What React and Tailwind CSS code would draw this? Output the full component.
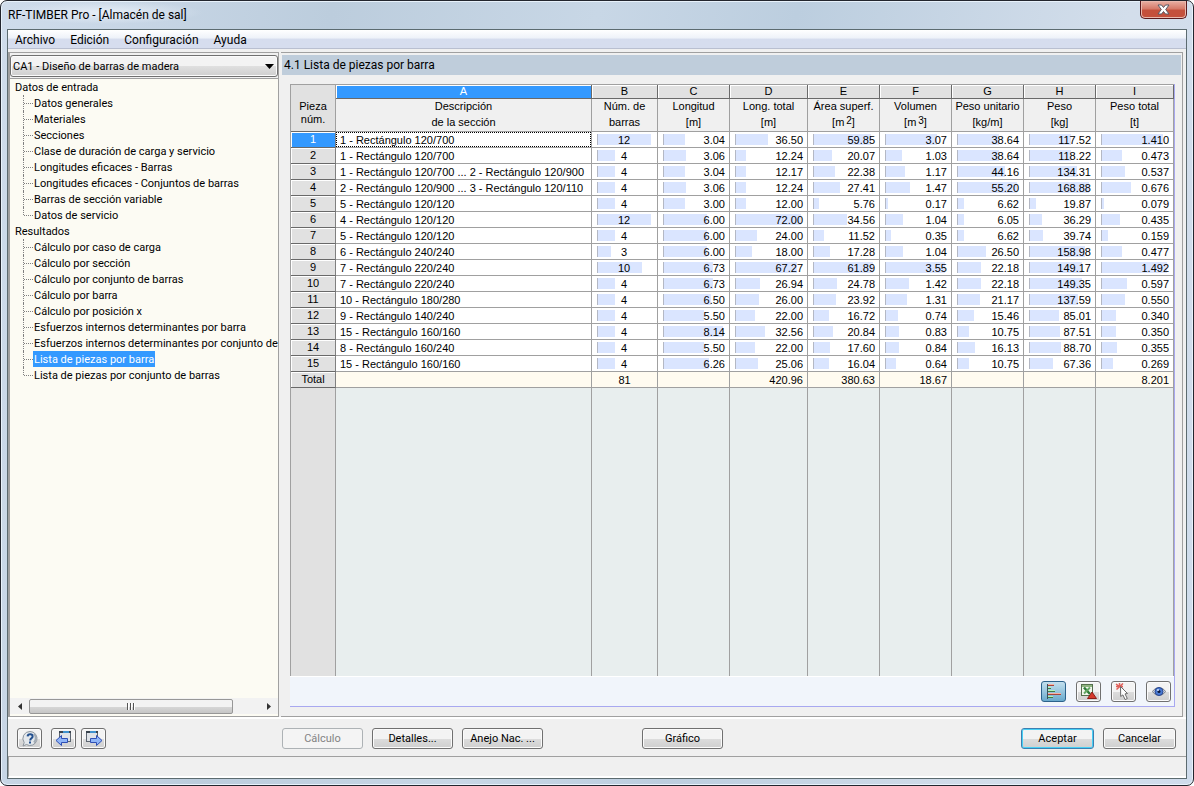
import React, { useState } from 'react';
import clsx from 'clsx';

const menus = ['Archivo', 'Edición', 'Configuración', 'Ayuda'];

const tree = [
  {
    title: 'Datos de entrada',
    items: [
      'Datos generales',
      'Materiales',
      'Secciones',
      'Clase de duración de carga y servicio',
      'Longitudes eficaces - Barras',
      'Longitudes eficaces - Conjuntos de barras',
      'Barras de sección variable',
      'Datos de servicio',
    ],
  },
  {
    title: 'Resultados',
    items: [
      'Cálculo por caso de carga',
      'Cálculo por sección',
      'Cálculo por conjunto de barras',
      'Cálculo por barra',
      'Cálculo por posición x',
      'Esfuerzos internos determinantes por barra',
      'Esfuerzos internos determinantes por conjunto de',
      'Lista de piezas por barra',
      'Lista de piezas por conjunto de barras',
    ],
  },
];

const columns = [
  { letter: 'A', title: 'Descripción', unit: 'de la sección', width: '' },
  { letter: 'B', title: 'Núm. de', unit: 'barras', width: 'w-[66px]', max: 12 },
  { letter: 'C', title: 'Longitud', unit: '[m]', width: 'w-[72px]', max: 8.14 },
  { letter: 'D', title: 'Long. total', unit: '[m]', width: 'w-[78px]', max: 72 },
  { letter: 'E', title: 'Área superf.', unit: 'm', power: '2', width: 'w-[72px]', max: 61.89 },
  { letter: 'F', title: 'Volumen', unit: 'm', power: '3', width: 'w-[72px]', max: 3.55 },
  { letter: 'G', title: 'Peso unitario', unit: '[kg/m]', width: 'w-[72px]', max: 55.2 },
  { letter: 'H', title: 'Peso', unit: '[kg]', width: 'w-[72px]', max: 168.88 },
  { letter: 'I', title: 'Peso total', unit: '[t]', width: 'w-[78px]', max: 1.492 },
];

const rows = [
  ['1 - Rectángulo 120/700', '12', '3.04', '36.50', '59.85', '3.07', '38.64', '117.52', '1.410'],
  ['1 - Rectángulo 120/700', '4', '3.06', '12.24', '20.07', '1.03', '38.64', '118.22', '0.473'],
  ['1 - Rectángulo 120/700 ... 2 - Rectángulo 120/900', '4', '3.04', '12.17', '22.38', '1.17', '44.16', '134.31', '0.537'],
  ['2 - Rectángulo 120/900 ... 3 - Rectángulo 120/110', '4', '3.06', '12.24', '27.41', '1.47', '55.20', '168.88', '0.676'],
  ['5 - Rectángulo 120/120', '4', '3.00', '12.00', '5.76', '0.17', '6.62', '19.87', '0.079'],
  ['4 - Rectángulo 120/120', '12', '6.00', '72.00', '34.56', '1.04', '6.05', '36.29', '0.435'],
  ['5 - Rectángulo 120/120', '4', '6.00', '24.00', '11.52', '0.35', '6.62', '39.74', '0.159'],
  ['6 - Rectángulo 240/240', '3', '6.00', '18.00', '17.28', '1.04', '26.50', '158.98', '0.477'],
  ['7 - Rectángulo 220/240', '10', '6.73', '67.27', '61.89', '3.55', '22.18', '149.17', '1.492'],
  ['7 - Rectángulo 220/240', '4', '6.73', '26.94', '24.78', '1.42', '22.18', '149.35', '0.597'],
  ['10 - Rectángulo 180/280', '4', '6.50', '26.00', '23.92', '1.31', '21.17', '137.59', '0.550'],
  ['9 - Rectángulo 140/240', '4', '5.50', '22.00', '16.72', '0.74', '15.46', '85.01', '0.340'],
  ['15 - Rectángulo 160/160', '4', '8.14', '32.56', '20.84', '0.83', '10.75', '87.51', '0.350'],
  ['8 - Rectángulo 160/240', '4', '5.50', '22.00', '17.60', '0.84', '16.13', '88.70', '0.355'],
  ['15 - Rectángulo 160/160', '4', '6.26', '25.06', '16.04', '0.64', '10.75', '67.36', '0.269'],
];

const totals = ['', '81', '', '420.96', '380.63', '18.67', '', '', '8.201'];

const HelpIcon = () => (
  <svg width="18" height="18" viewBox="0 0 18 18">
    <path d="M9 1.5a7 7 0 1 1-3.6 13L2 16l1.2-3.4A7 7 0 0 1 9 1.5z" fill="#e4e8ec" stroke="#8d959d" />
    <path d="M13 3.500a6.500 6.500 0 0 1 0 9" fill="none" stroke="#a2abb4" strokeWidth="2" />
    <path d="M6.600 6.400c.2-3 5-3 5 0 0 2-2.400 1.800-2.400 4" fill="none" stroke="#23508f" strokeWidth="2" />
    <rect x="8" y="11.500" width="2" height="2" fill="#23508f" />
  </svg>
);

const PanelIcon = ({ forward }) => (
  <svg width="18" height="18" viewBox="0 0 18 18">
    <g transform={forward ? 'translate(-3 0)' : undefined}>
      <rect x="4.500" y="1.500" width="11" height="10" fill="#dfe3e8" stroke="#5c6570" />
      <path d="M4 2h12" stroke="#39434e" strokeWidth="2" />
      <path d="M8 2h6" stroke="#3f92cf" strokeWidth="2" />
    </g>
    <path
      d={forward ? 'M17 10.500l-5.500-5v3h-6v4h6v3z' : 'M1 10.500l5.500-5v3h6v4h-6v3z'}
      fill="#8fb5f8"
      stroke="#2f4fb5"
    />
  </svg>
);

const BarsIcon = () => (
  <svg width="18" height="18" viewBox="0 0 18 18" shapeRendering="crispEdges">
    <rect x="2" y="1" width="1" height="15" fill="#3c5058" />
    <rect x="3" y="1" width="6" height="1" fill="#f6b3a6" />
    <rect x="3" y="2" width="6" height="1" fill="#a8463c" />
    <rect x="3" y="4" width="3" height="1" fill="#b4f2ba" />
    <rect x="3" y="5" width="3" height="1" fill="#3e7a4a" />
    <rect x="3" y="7" width="7" height="1" fill="#b4f2ba" />
    <rect x="3" y="8" width="7" height="1" fill="#3e7a4a" />
    <rect x="3" y="10" width="13" height="1" fill="#f6b3a6" />
    <rect x="3" y="11" width="13" height="1" fill="#a8463c" />
    <rect x="3" y="13" width="5" height="1" fill="#b4f2ba" />
    <rect x="3" y="14" width="5" height="1" fill="#3e7a4a" />
  </svg>
);

const ExcelIcon = () => (
  <svg width="18" height="18" viewBox="0 0 18 18">
    <rect x="1.500" y="1.500" width="11" height="11" fill="#f3f7ef" stroke="#55704d" />
    <path d="M2 2h10v2H2z" fill="#8fb47f" />
    <path d="M4 4.500l6 6.500" stroke="#2f7a38" strokeWidth="2.500" />
    <path d="M10 4.500l-6 6" stroke="#62a862" strokeWidth="2" />
    <path d="M12 9l4.500 6.500h-9z" fill="#d63a2c" stroke="#8c1d16" />
  </svg>
);

const PickIcon = () => (
  <svg width="18" height="18" viewBox="0 0 18 18">
    <path d="M1 1l7 5M8 .500L1.500 6.500M4.500 0v4M1 3.500h7" stroke="#e0605a" strokeWidth="1.500" />
    <path d="M5.500 3.500l7 7-2.500.4 2.300 4.600-2.200 1.100-2.200-4.700L5.700 13.500z" fill="#fff" stroke="#6b6b6b" />
  </svg>
);

const EyeIcon = () => (
  <svg width="18" height="18" viewBox="0 0 18 18">
    <path d="M2.500 8.500c3-5 10-5 13 0-3 5-10 5-13 0z" fill="#d0d5dd" stroke="#7b8088" />
    <circle cx="9" cy="8.500" r="4" fill="#4a7ad2" stroke="#28458f" />
    <circle cx="9" cy="8.500" r="1.500" fill="#0e1b3f" />
    <circle cx="8" cy="7" r="1" fill="#cfe0ff" />
  </svg>
);

const IconButton = ({ label, active, children }) => (
  <button
    type="button"
    aria-label={label}
    className={clsx(
      'flex h-[21px] w-[25px] items-center justify-center rounded-[3px] border',
      active
        ? 'border-[#2c628b] bg-linear-to-b from-[#c3dfee] via-[#98c6de] to-[#68a9cc]'
        : 'border-[#707070] bg-linear-to-b from-[#f3f3f3] from-50% via-[#dddddd] via-50% to-[#cfcfcf] shadow-[inset_0_0_0_1px_#fbfbfb]'
    )}
  >
    {children}
  </button>
);

const PushButton = ({ children, primary, disabled, className }) => (
  <button
    type="button"
    disabled={disabled}
    className={clsx(
      'h-[21px] rounded-[3px] border pt-px text-center leading-[18px]',
      disabled && 'border-[#adb2b5] bg-[#f4f4f4] text-[#838383]',
      primary &&
        'border-[#3c7fb1] bg-linear-to-b from-[#f3f3f3] from-50% via-[#dddddd] via-50% to-[#cfcfcf] shadow-[inset_0_0_0_1px_#48d0f5]',
      !disabled &&
        !primary &&
        'border-[#707070] bg-linear-to-b from-[#f3f3f3] from-50% via-[#dddddd] via-50% to-[#cfcfcf] shadow-[inset_0_0_0_1px_#fbfbfb]',
      className
    )}
  >
    {children}
  </button>
);

const TitleBar = () => (
  <header className="flex h-7 shrink-0 items-start justify-between">
    <h1 className="rounded-full bg-[radial-gradient(closest-side,#e6eef7,transparent)] pt-[5px] pr-4 pl-px text-[12px] leading-[18px] text-black">
      RF-TIMBER Pro - [Almacén de sal]
    </h1>
    <button
      type="button"
      aria-label="Cerrar"
      className="flex h-[18px] w-[47px] items-center justify-center rounded-b-[5px] border border-t-0 border-[#5a1a1e] bg-linear-to-b from-[#e9b0a4] from-0% via-[#d67b6a] via-45% to-[#c4503c] to-55% shadow-[inset_0_0_0_1px_#e9b9ae]"
    >
      <svg width="13" height="11" viewBox="0 0 13 11">
        <path d="M1 1h3.500l2 2.500L8.500 1H12L8.700 5.500 12 10H8.500l-2-2.500-2 2.500H1l3.300-4.500z" fill="#fff" stroke="#565a66" />
      </svg>
    </button>
  </header>
);

const MenuBar = () => (
  <nav className="flex h-[19px] shrink-0 gap-[15px] border-b border-[#b9bfd0] bg-linear-to-b from-white from-0% via-[#eef2f9] via-45% to-[#d6ddee] to-50% pt-0.5 pl-[7px] text-[12px] leading-4">
    {menus.map((menu) => (
      <button key={menu} type="button">
        {menu}
      </button>
    ))}
  </nav>
);

const TreeView = ({ selected, onSelect }) => (
  <div className="flex min-h-0 flex-1 flex-col border-t border-[#a0a0a0] bg-[#fcfbf3]">
    <div className="min-h-0 flex-1 overflow-hidden whitespace-nowrap">
      {tree.map((group) => (
        <section key={group.title}>
          <h2 className="h-4 pt-0.5 pl-[5px] leading-[14px]">{group.title}</h2>
          <ul className="pl-[13px]">
            {group.items.map((item, i) => (
              <li key={item} className="flex h-4">
                <span
                  className={clsx(
                    'shrink-0 border-l border-dotted border-[#808080]',
                    i === group.items.length - 1 ? 'h-2' : 'h-4'
                  )}
                />
                <span className="mt-2 w-[9px] shrink-0 border-t border-dotted border-[#808080]" />
                <button
                  type="button"
                  onClick={() => onSelect(item)}
                  className={clsx(
                    'h-4 shrink-0 px-px pt-0.5 leading-[14px]',
                    item === selected && 'bg-[#3399ff] text-white'
                  )}
                >
                  {item}
                </button>
              </li>
            ))}
          </ul>
        </section>
      ))}
    </div>
    <div className="mb-0.5 flex h-4 shrink-0 items-center bg-[#f2f2f2]">
      <button type="button" aria-label="Desplazar a la izquierda" className="flex w-[19px] justify-center">
        <svg width="4" height="7" viewBox="0 0 4 7">
          <path d="M4 0v7L0 3.500z" fill="#333" />
        </svg>
      </button>
      <div className="flex h-[15px] w-[204px] items-center justify-center gap-px rounded-[2px] border border-[#979797] bg-linear-to-b from-[#f3f3f3] from-50% via-[#d8d8d8] via-50% to-[#c6c6c6]">
        <span className="h-[7px] w-0.5 border-r border-white bg-[#555]" />
        <span className="h-[7px] w-0.5 border-r border-white bg-[#555]" />
        <span className="h-[7px] w-0.5 border-r border-white bg-[#555]" />
      </div>
      <button type="button" aria-label="Desplazar a la derecha" className="ml-auto flex w-[19px] justify-center">
        <svg width="4" height="7" viewBox="0 0 4 7">
          <path d="M0 0v7l4-3.500z" fill="#333" />
        </svg>
      </button>
    </div>
  </div>
);

const Sidebar = () => {
  const [selected, setSelected] = useState('Lista de piezas por barra');

  return (
    <aside className="flex w-[271px] shrink-0 flex-col border border-l-2 border-[#a0a0a0] bg-[#f0f0f0] pt-0.5">
      <div className="relative mb-px">
        <select
          aria-label="Caso de diseño"
          className="block h-[22px] w-full appearance-none rounded-[3px] border border-[#707070] bg-linear-to-b from-[#f3f3f3] from-50% via-[#e0e0e0] via-50% to-[#cfcfcf] pt-px pl-[2px] leading-5 shadow-[inset_0_0_0_1px_#fbfbfb]"
        >
          <option>CA1 - Diseño de barras de madera</option>
        </select>
        <svg className="pointer-events-none absolute top-[9px] right-1" width="9" height="5" viewBox="0 0 9 5">
          <path d="M0 0h9L4.500 5z" fill="#000" />
        </svg>
      </div>
      <TreeView selected={selected} onSelect={setSelected} />
    </aside>
  );
};

const ValueCell = ({ value, column }) => (
  <td className="h-4 border-r border-b border-[#a0a0a0] bg-white p-0 pr-1.5 pl-[5px]">
    <div className="grid h-[15px] items-center">
      <div
        className="col-start-1 row-start-1 h-[11px] border-l border-[#b4b8c4] bg-[#dae5ff]"
        style={{ width: `${(Number(value) / column.max) * 100}%` }}
      />
      <span
        className={clsx(
          'col-start-1 row-start-1 pt-px leading-[14px]',
          column.letter === 'B' ? 'text-center' : '-mr-0.5 text-right'
        )}
      >
        {value}
      </span>
    </div>
  </td>
);

const RowHeader = ({ children, selected }) => (
  <th
    scope="row"
    className={clsx(
      'h-4 border-r border-b border-b-[#696969] border-r-[#808080] p-0 text-center align-top leading-[14px] font-normal shadow-[inset_1px_1px_0_#fff]',
      selected ? 'bg-[#3399ff] text-white' : 'bg-[#e1e1e1]'
    )}
  >
    {children}
  </th>
);

const PartsTable = () => (
  <table className="h-full w-full table-fixed border-separate border-spacing-0 border-t border-l border-[#a0a0a0] font-['Liberation_Sans',sans-serif]">
    <colgroup>
      <col className="w-[45px]" />
      {columns.map((c) => (
        <col key={c.letter} className={c.width} />
      ))}
    </colgroup>
    <thead>
      <tr>
        <th
          rowSpan={2}
          className="border-r border-b border-b-[#696969] border-r-[#a0a0a0] bg-[#e1e1e1] p-0 pt-2.5 text-center leading-[13px] font-normal"
        >
          Pieza
          <br />
          núm.
        </th>
        {columns.map((c) => (
          <th
            key={c.letter}
            className={clsx(
              'h-[14px] border-r border-b border-[#696969] p-0 text-center leading-[13px] font-normal shadow-[inset_1px_1px_0_#fff]',
              c.letter === 'A' ? 'bg-[#3399ff] text-white' : 'bg-[#e1e1e1]'
            )}
          >
            {c.letter}
          </th>
        ))}
      </tr>
      <tr>
        {columns.map((c) => (
          <th
            key={c.letter}
            scope="col"
            className="h-[33px] border-r border-b border-[#a0a0a0] bg-[#f0f0f0] p-0 text-center align-top leading-4 font-normal whitespace-nowrap"
          >
            <div className="-mt-px">
              {c.title}
              <br />
              {c.power ? (
                <>
                  [{c.unit}
                  <span className="ml-0.5 align-[2px] text-[10px] leading-none">{c.power}</span>]
                </>
              ) : (
                c.unit
              )}
            </div>
          </th>
        ))}
      </tr>
    </thead>
    <tbody>
      {rows.map((row, i) => (
        <tr key={i}>
          <RowHeader selected={i === 0}>{i + 1}</RowHeader>
          <td className="h-4 border-r border-b border-[#a0a0a0] bg-white p-0">
            <div
              className={clsx(
                'h-[15px] overflow-hidden pt-px pl-1 leading-[14px] whitespace-nowrap',
                i === 0 && 'outline-1 -outline-offset-1 outline-black outline-dotted'
              )}
            >
              {row[0]}
            </div>
          </td>
          {row.slice(1).map((value, j) => (
            <ValueCell key={j} value={value} column={columns[j + 1]} />
          ))}
        </tr>
      ))}
      <tr>
        <RowHeader>Total</RowHeader>
        {totals.map((value, i) => (
          <td
            key={i}
            className={clsx(
              'h-4 border-r border-b border-[#a0a0a0] bg-[#fffbf0] p-0 pt-px leading-[14px]',
              i === 1 ? 'text-center' : 'pr-1 text-right'
            )}
          >
            {value}
          </td>
        ))}
      </tr>
      <tr className="h-full">
        <td className="border-r border-[#a0a0a0] bg-[#e1e1e1]" />
        {columns.map((c) => (
          <td key={c.letter} className="border-r border-[#a0a0a0] bg-[#e8eeee]" />
        ))}
      </tr>
    </tbody>
  </table>
);

const MainPanel = () => (
  <main className="mr-[3px] ml-0.5 flex min-w-0 flex-1 flex-col border border-l-0 border-[#a0a0a0] pt-0.5 pr-px">
    <h2 className="ml-px h-5 shrink-0 bg-[#bfcddb] pl-0.5 text-[12px] leading-5">4.1 Lista de piezas por barra</h2>
    <div className="mt-[9px] mr-[6px] mb-[9px] ml-[9px] flex min-h-0 flex-1 flex-col border-r border-b border-[#a8a8f0]">
      <div className="min-h-0 flex-1">
        <PartsTable />
      </div>
      <div className="flex h-[30px] shrink-0 items-center justify-end gap-[10px] border-t border-white bg-[#f1f5fb] pr-[3px]">
        <IconButton label="Barras de relación" active>
          <BarsIcon />
        </IconButton>
        <IconButton label="Exportar a Excel">
          <ExcelIcon />
        </IconButton>
        <IconButton label="Seleccionar barra">
          <PickIcon />
        </IconButton>
        <IconButton label="Vista">
          <EyeIcon />
        </IconButton>
      </div>
    </div>
  </main>
);

const Footer = () => (
  <footer className="flex h-[38px] shrink-0 items-start border-b border-[#a0a0a0] pt-[9px] pr-[10px] pl-[9px]">
    <div className="flex w-[265px] shrink-0 gap-[5px]">
      <div className="mr-1">
        <IconButton label="Ayuda">
          <HelpIcon />
        </IconButton>
      </div>
      <IconButton label="Tabla anterior">
        <PanelIcon />
      </IconButton>
      <IconButton label="Tabla siguiente">
        <PanelIcon forward />
      </IconButton>
    </div>
    <div className="flex flex-1 gap-[9px]">
      <PushButton disabled className="w-[81px]">
        Cálculo
      </PushButton>
      <PushButton className="w-[81px]">Detalles...</PushButton>
      <PushButton className="w-[81px]">Anejo Nac. ...</PushButton>
      <PushButton className="ml-[90px] w-[81px]">Gráfico</PushButton>
      <PushButton primary className="ml-auto w-[73px]">
        Aceptar
      </PushButton>
      <PushButton className="w-[73px]">Cancelar</PushButton>
    </div>
  </footer>
);

const App = () => (
  <div className="h-screen bg-white font-[Roboto,'Noto_Sans',sans-serif] text-[11px] text-black">
    <div className="flex h-full flex-col rounded-[7px] border border-[#23262e] bg-[linear-gradient(100deg,#cfdceb_0%,#bccddd_25%,#c8d7e6_45%,#bccedf_60%,#d3deeb_85%,#cfdcec_100%)] px-1.5 pb-1.5 shadow-[inset_0_0_0_1px_#e8f2fb]">
      <TitleBar />
      <div className="flex min-h-0 flex-1 flex-col border border-[#5c6b70] bg-[#f0f0f0]">
        <MenuBar />
        <div className="flex min-h-0 flex-1 border-b-2 border-white pt-[3px]">
          <Sidebar />
          <MainPanel />
        </div>
        <Footer />
        <div className="h-[21px] shrink-0 border-b-2 border-l border-b-white border-l-[#a0a0a0]" />
      </div>
    </div>
  </div>
);

export default App;
